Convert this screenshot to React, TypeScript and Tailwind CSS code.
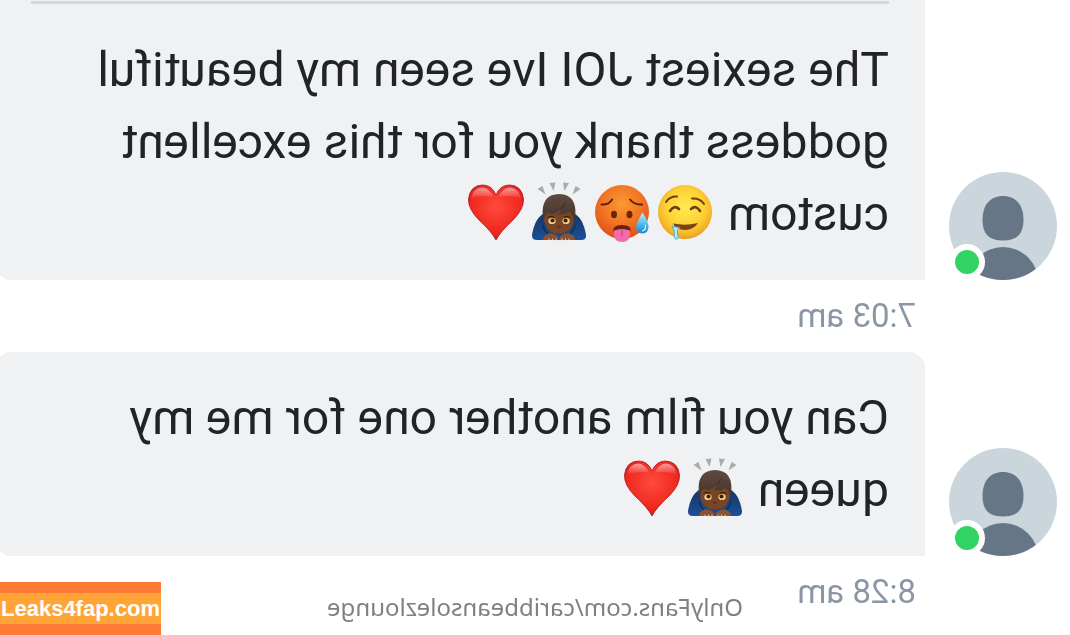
import React from 'react';

type EmojiName = 'drool' | 'hot' | 'bow' | 'heart';

interface Message {
    id: number;
    text: string;
    emojis: EmojiName[];
    time: string;
    continued?: boolean;
}

const messages: Message[] = [
    {
        id: 1,
        text: 'The sexiest JOI Ive seen my beautiful goddess thank you for this excellent custom',
        emojis: ['drool', 'hot', 'bow', 'heart'],
        time: '7:03 am',
        continued: true,
    },
    {
        id: 2,
        text: 'Can you film another one for me my queen',
        emojis: ['bow', 'heart'],
        time: '8:28 am',
    },
];

// shared gradients, referenced by every emoji
const EmojiDefs: React.FC = () => (
    <svg className="absolute size-0" aria-hidden="true">
        <defs>
            <radialGradient id="yellowFace" cx="0.5" cy="0.42" r="0.6">
                <stop offset="0" stopColor="#ffec50" />
                <stop offset="0.6" stopColor="#fdd036" />
                <stop offset="0.88" stopColor="#f2ae25" />
                <stop offset="1" stopColor="#dd8f1c" />
            </radialGradient>
            <radialGradient id="hotFace" cx="0.5" cy="0.35" r="0.68">
                <stop offset="0" stopColor="#f99a32" />
                <stop offset="0.55" stopColor="#f27423" />
                <stop offset="1" stopColor="#dd4a18" />
            </radialGradient>
            <linearGradient id="drop" x1="0" y1="0" x2="0" y2="1">
                <stop offset="0" stopColor="#c4eefb" />
                <stop offset="0.6" stopColor="#45b4ea" />
                <stop offset="1" stopColor="#1c84cc" />
            </linearGradient>
            <radialGradient id="heartFill" cx="0.5" cy="0.4" r="0.65">
                <stop offset="0" stopColor="#ff4a3c" />
                <stop offset="0.7" stopColor="#f0281f" />
                <stop offset="1" stopColor="#b81818" />
            </radialGradient>
            <linearGradient id="heartShine" x1="0" y1="0" x2="0" y2="1">
                <stop offset="0" stopColor="#fff" stopOpacity="0.55" />
                <stop offset="1" stopColor="#fff" stopOpacity="0" />
            </linearGradient>
            <linearGradient id="hair" x1="0" y1="0" x2="0" y2="1">
                <stop offset="0" stopColor="#5f4a40" />
                <stop offset="1" stopColor="#47362e" />
            </linearGradient>
            <linearGradient id="sleeve" x1="0" y1="0" x2="0" y2="1">
                <stop offset="0" stopColor="#183561" />
                <stop offset="1" stopColor="#1a5098" />
            </linearGradient>
        </defs>
    </svg>
);

const Drool = () => (
    <>
        <circle cx="28" cy="27" r="27" fill="url(#yellowFace)" />
        <g fill="none" stroke="#6b3f10" strokeLinecap="round">
            <path d="M47 17Q43 11 36 11.500" strokeWidth="2" />
            <path d="M21 13.500Q13 13 9 19" strokeWidth="2" />
            <path d="M43 26Q39 19.500 34 24" strokeWidth="2.600" />
            <path d="M22 24Q17 19.500 13 26" strokeWidth="2.600" />
        </g>
        <path d="M15 38Q27 41 40 38.500Q37 45 28 45Q19 44.500 15 38Z" fill="#7a4312" />
        <path d="M33 42.500L41 41.500L39 45L38.500 52Q38 55 36 54Q34 52 35.500 49V45Z" fill="#b9ecfa" stroke="#38a8d4" strokeWidth="0.900" />
    </>
);

const Hot = () => (
    <>
        <circle cx="28" cy="27" r="27" fill="url(#hotFace)" />
        <g fill="none" stroke="#5f220c" strokeWidth="2" strokeLinecap="round">
            <path d="M48.500 19.500Q41 20 38 14.500" />
            <path d="M20 14.500Q16 20 8 19.500" />
        </g>
        <ellipse cx="36" cy="29.500" rx="3" ry="3.800" fill="#6b260c" />
        <ellipse cx="20.500" cy="29.500" rx="3" ry="3.800" fill="#6b260c" />
        <path d="M36.500 47Q38 40 28 40Q18 40 19.500 47Z" fill="#6b220c" />
        <path d="M20 45.500Q28 42.500 36 45.500V49Q36 57 28 57Q20 57 20 49Z" fill="#f46bab" />
        <path d="M28 45.500V51" stroke="#cf3a7c" strokeWidth="1.200" strokeLinecap="round" />
        <path d="M7.500 27.500Q2 36 1.500 41.500Q2 48.500 7.500 48.500Q14 48.500 14 41.500Q12 34 7.500 27.500Z" fill="url(#drop)" />
        <path d="M4.500 40Q4 45 7.500 46" fill="none" stroke="#e4f8ff" strokeWidth="1.200" strokeLinecap="round" />
    </>
);

const Bow = () => (
    <>
        <path d="M49.500 4L44.500 1L41.500 9.500Z M37.500 -2L31.500 -2.500L33.500 6Z M24 -2.500L18 -2L22.500 6Z M11.500 1L6.500 4L14.500 9.500Z" fill="#a9abad" />
        <path d="M14 28Q4 32 1 50Q0.500 55 6 55H50Q55.500 55 55 50Q52 32 42 28Z" fill="url(#sleeve)" />
        <path d="M12 40Q13 46 18 50M44 40Q43 46 38 50" fill="none" stroke="#122c52" strokeWidth="1.500" />
        <path d="M12.500 28Q12.500 48.500 28 48.500Q43.500 48.500 43.500 28L40 20H16Z" fill="#784625" />
        <path d="M12 33Q9 9.500 28 9Q47 9.500 44 33L42.500 34Q42 29 39 28Q32 31 26 24Q27 28 29 29.500Q22 30 18 27Q14 29 13.500 34Z" fill="url(#hair)" />
        <path d="M26 24Q23 20 22 18" fill="none" stroke="#33251f" strokeWidth="0.900" />
        <ellipse cx="35" cy="36" rx="3.700" ry="3.100" fill="#efd38a" />
        <ellipse cx="21" cy="36" rx="3.700" ry="3.100" fill="#efd38a" />
        <circle cx="34.500" cy="35.500" r="2.100" fill="#42200c" />
        <circle cx="21.500" cy="35.500" r="2.100" fill="#42200c" />
        <path d="M39 32Q36 30.500 33 32M17 32Q20 30.500 23 32" fill="none" stroke="#3a1d0e" strokeWidth="1" strokeLinecap="round" />
        <path d="M26 41.500Q28 43 30 41.500" fill="none" stroke="#492510" strokeWidth="1" />
        <path d="M28.500 53Q31 48 38 48.500Q44 50 44 55H29Z" fill="#8a5230" />
        <path d="M27.500 53Q25 48 18 48.500Q12 50 12 55H27Z" fill="#8a5230" />
        <path d="M31 53.500V55.500M34.500 53.500V55.500M38 53.500V55.500M25 53.500V55.500M21.500 53.500V55.500M18 53.500V55.500" stroke="#e2c8b4" strokeWidth="1" />
    </>
);

const Heart = () => (
    <>
        <path d="M28 55Q24 47 11 35Q0 24 0.500 14Q2 0.500 14.500 0Q24 0 28 10Q32 0 41.500 0Q54 0.500 55.500 14Q56 24 45 35Q32 47 28 55Z" fill="url(#heartFill)" stroke="#b3202a" strokeWidth="0.900" />
        <path d="M3 14Q5 3 14 2.500Q22 3 25 12Q15 9 3 14Z" fill="url(#heartShine)" />
        <path d="M53 14Q51 3 42 2.500Q34 3 31 12Q41 9 53 14Z" fill="url(#heartShine)" />
    </>
);

const drawings: Record<EmojiName, React.FC> = {drool: Drool, hot: Hot, bow: Bow, heart: Heart};

const Emoji: React.FC<{name: EmojiName}> = ({name}) => {
    const Drawing = drawings[name];
    return (
        <svg viewBox="0 0 63 60" className="inline-block h-[60px] w-[63px] align-[-12px]" aria-hidden="true">
            <g transform="translate(3 3)">
                <Drawing />
            </g>
        </svg>
    );
};

const Avatar: React.FC = () => (
    <div className="relative size-[108px] shrink-0">
        <div className="size-full overflow-hidden rounded-full bg-[#cad5dc]">
            <svg viewBox="0 0 108 108" className="size-full" fill="#667687" aria-hidden="true">
                <path d="M54 24C67 24 74.500 33 74.500 48C74.500 62 68 68.500 54 68.500C40 68.500 33.500 62 33.500 48C33.500 33 41 24 54 24Z" />
                <circle cx="54" cy="110.500" r="35.500" />
            </svg>
        </div>
        {/* online status */}
        <span className="absolute right-0 bottom-0 size-9 rounded-full border-6 border-white bg-[#31d363]" />
    </div>
);

const MessageRow: React.FC<{message: Message}> = ({message}) => (
    <article className="-mr-[5px]">
        <div className="flex items-end gap-6">
            <Avatar />
            <div
                className={
                    message.continued
                        ? 'min-w-0 flex-1 rounded-br-2xl bg-[#f0f1f3] px-9 pt-px pb-[30px]'
                        : 'min-w-0 flex-1 rounded-t-2xl rounded-br-2xl bg-[#f0f1f3] px-9 py-[30px]'
                }
            >
                {message.continued && <hr className="mb-[30px] border-t-3 border-[#d6d8da]" />}
                <p className="text-[48px] leading-[72px] text-[#212326]">
                    {message.text}{' '}
                    <span className="whitespace-nowrap">
                        {message.emojis.map((name) => (
                            <Emoji key={name} name={name} />
                        ))}
                    </span>
                </p>
            </div>
        </div>
        <time className="ml-[141px] block text-[33px] leading-[72px] text-[#8a96a6]">{message.time}</time>
    </article>
);

const App: React.FC = () => (
    <div className="relative min-h-screen overflow-hidden bg-white font-[Roboto,sans-serif]">
        {/* the chat is shown flipped horizontally */}
        <main className="-scale-x-100 pl-[13px]">
            <EmojiDefs />
            {messages.map((message) => (
                <MessageRow key={message.id} message={message} />
            ))}
        </main>

        <p className="absolute inset-x-0 bottom-3 -scale-x-100 text-center font-['Noto_Sans',sans-serif] text-[24px] leading-8 text-[#808080]">
            OnlyFans.com/caribbeansolezlounge
        </p>

        <div className="absolute bottom-0 left-0 bg-[#ff7a35] py-[11px]">
            <p className="bg-[#ffa538] px-px font-['Liberation_Sans',sans-serif] text-[22px] leading-[31px] font-bold text-white">
                Leaks4fap.com
            </p>
        </div>
    </div>
);

export default App;
